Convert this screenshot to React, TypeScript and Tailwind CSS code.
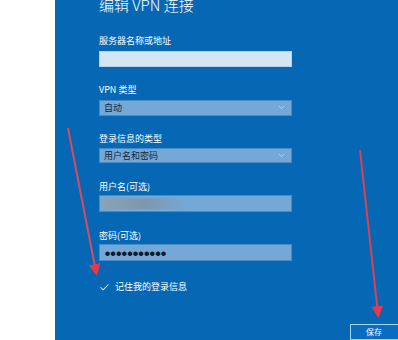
import { ChevronDown, Check } from "lucide-react";

const font = { fontFamily: '"Segoe UI", "Noto Sans CJK SC", "Noto Sans", sans-serif' };

function Label({ text, className }: { text: string; className: string }) {
  return <div className={"h-[12px] text-[9px] leading-[12px] text-white " + className}>{text}</div>;
}

function Select({ value, className }: { value: string; className: string }) {
  return (
    <div className={"flex h-[16px] w-[193px] items-center justify-between border border-[#4a8ac4] bg-[#74a8d7] pl-[4px] pr-[5px] " + className}>
      <span className="text-[9px] text-[#13263a]">{value}</span>
      <ChevronDown size={9} color="#c3dcf0" strokeWidth={2} />
    </div>
  );
}

export default function App() {
  return (
    <div className="relative flex h-[340px] w-[398px] overflow-hidden bg-white" style={font}>
      <div className="w-[55px] shrink-0 bg-white" />
      <div className="flex flex-1 flex-col bg-[#0667b5] pl-[44px]">
        <div className="-mt-[5px] h-[20px] text-[15px] font-light leading-[20px] text-white">编辑 VPN 连接</div>

        <Label text="服务器名称或地址" className="mt-[20px]" />
        <div className="mt-[4px] h-[16px] w-[193px] border border-[#b9d3ea] bg-[#d4e5f3]" />

        <Label text="VPN 类型" className="mt-[17px]" />
        <Select value="自动" className="mt-[4px]" />

        <Label text="登录信息的类型" className="mt-[17px]" />
        <Select value="用户名和密码" className="mt-[3px]" />

        <Label text="用户名(可选)" className="mt-[18px]" />
        <div className="mt-[2px] flex h-[17px] w-[193px] items-center border border-[#4a8ac4] bg-[#74a8d7]">
          <div className="ml-[2px] h-[11px] w-[84px] bg-gradient-to-r from-[#8aa3b8] via-[#7d97ad] to-[#74a8d7]" />
        </div>

        <Label text="密码(可选)" className="mt-[18px]" />
        <div className="mt-[2px] flex h-[17px] w-[193px] items-center border border-[#4a8ac4] bg-[#74a8d7] pl-[5px]">
          <span className="text-[5px] leading-[8px] tracking-[0.6px] text-[#0c1a2a]">●●●●●●●●●●●</span>
        </div>

        <div className="mt-[20px] flex h-[12px] items-center gap-[5px]">
          <Check size={11} color="#cfe8fa" strokeWidth={2.2} />
          <span className="text-[9px] leading-[12px] text-white">记住我的登录信息</span>
        </div>

        <div className="mt-[31px] flex justify-end">
          <div className="-mr-[6px] flex h-[16px] w-[54px] items-start justify-center border border-[#9fd6f2] bg-[#0a6cc0] pr-[6px] pt-[1px]">
            <span className="text-[8px] leading-[12px] text-white">保存</span>
          </div>
        </div>
      </div>

      <svg className="pointer-events-none absolute inset-0" width="398" height="340" viewBox="0 0 398 340">
        <defs>
          <marker id="head" markerWidth="6" markerHeight="6" refX="4" refY="3" orient="auto">
            <path d="M0,0 L6,3 L0,6 z" fill="#e8394a" />
          </marker>
        </defs>
        <line x1="68" y1="128" x2="96" y2="272" stroke="#d94c5e" strokeWidth="2" markerEnd="url(#head)" />
        <line x1="360" y1="150" x2="378" y2="314" stroke="#e0404f" strokeWidth="2" markerEnd="url(#head)" />
      </svg>
    </div>
  );
}
